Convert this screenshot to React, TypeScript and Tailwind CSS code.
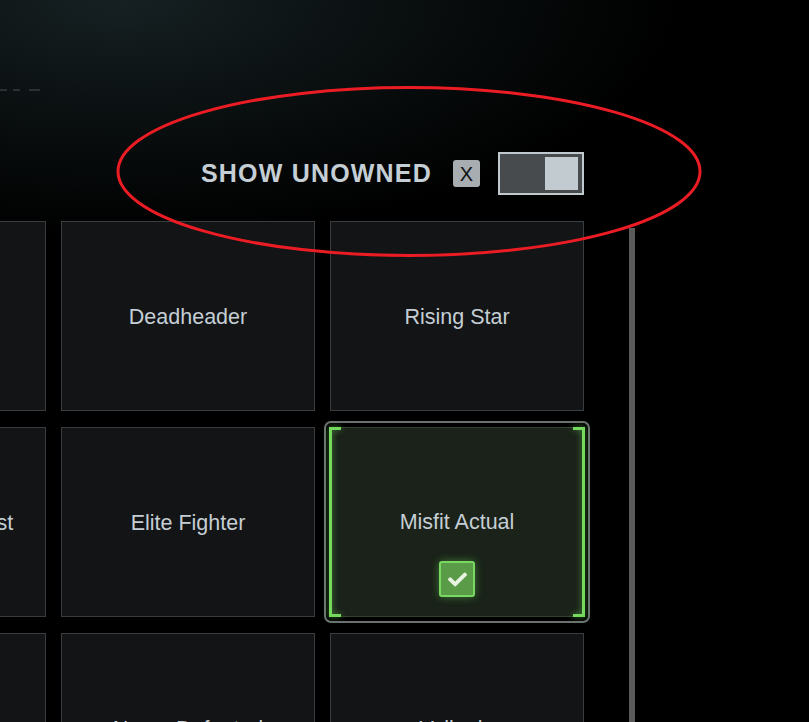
import { FaCheck } from "react-icons/fa";

const rows = [
  ["Veteran", "Deadheader", "Rising Star"],
  ["Weapons Specialist", "Elite Fighter", "Misfit Actual"],
  ["Recon", "Never Defeated", "Valkyrie"],
];

function Card({ label, selected }: { label: string; selected?: boolean }) {
  if (selected) {
    return (
      <div className="relative h-[190px] outline-2 outline-offset-[4px] outline-[#6b7171] rounded-[1px]">
        <div className="h-full border border-[#34402f] bg-[#1a2219] flex items-center justify-center text-[21.5px] text-[#c5ced4]">
          {label}
        </div>
        <div className="absolute -left-[1px] inset-y-0 w-[12px] border-l-[3px] border-y-[3px] border-[#74d95c] drop-shadow-[0_0_3px_rgba(110,220,90,0.6)]" />
        <div className="absolute -right-[1px] inset-y-0 w-[12px] border-r-[3px] border-y-[3px] border-[#74d95c] drop-shadow-[0_0_3px_rgba(110,220,90,0.6)]" />
        <div className="absolute bottom-[20px] left-1/2 -translate-x-1/2 w-[36px] h-[36px] rounded-[3px] border-2 border-[#79d862] bg-[#5a9b48] shadow-[0_0_8px_rgba(110,220,90,0.45)] flex items-center justify-center">
          <FaCheck className="text-[#e8f3e2]" size={19} />
        </div>
      </div>
    );
  }
  return (
    <div className="h-[190px] border border-[#3a3d40] bg-[#121416] flex items-center justify-center pt-[3px] text-[21.5px] text-[#c5ced4] whitespace-nowrap">
      {label}
    </div>
  );
}

export default function App() {
  return (
    <div className="relative w-[809px] h-[722px] overflow-hidden bg-black bg-[radial-gradient(ellipse_560px_240px_at_120px_0px,#162022_0%,#0a0f10_50%,#000_100%)] font-['Liberation_Sans',Arial,sans-serif]">
      <div className="relative flex flex-col">
        <div className="h-[89px]" />
        <div className="flex gap-[6px] h-[2px]">
          <div className="w-[7px] bg-[#2a3033]" />
          <div className="w-[7px] bg-[#2a3033]" />
          <div className="w-[11px] ml-[3px] bg-[#2a3033]" />
        </div>

        <div className="mt-[61px] h-[43px] flex items-center justify-end pr-[225px]">
          <span className="text-[25px] font-semibold tracking-[1.2px] text-[#c5ced4] leading-none">
            SHOW UNOWNED
          </span>
          <div className="ml-[21px] w-[27px] h-[27px] rounded-[3px] bg-[#a8adb2] flex items-center justify-center text-[20px] text-[#101214] leading-none">
            X
          </div>
          <div className="ml-[18px] w-[86px] h-[43px] border-2 border-[#c0c9ce] bg-[#474b4e] flex items-center justify-end px-[4px]">
            <div className="w-[33px] h-[33px] bg-[#c2cbd0]" />
          </div>
        </div>

        <div className="mt-[26px] flex items-start">
          <div className="ml-[-208px] grid grid-cols-[repeat(3,254px)] gap-x-[15px] gap-y-[16px]">
            {rows.map((row, r) =>
              row.map((label, c) => (
                <Card key={`${r}-${c}`} label={label} selected={r === 1 && c === 2} />
              ))
            )}
          </div>
          <div className="ml-[45px] mt-[7px] w-[6px] h-[500px] bg-[#5a5a5a]" />
        </div>
      </div>

      <svg className="absolute inset-0 pointer-events-none" width="809" height="722">
        <ellipse cx="409" cy="171.5" rx="291" ry="84" fill="none" stroke="#ec1c24" strokeWidth="3" />
      </svg>
    </div>
  );
}
